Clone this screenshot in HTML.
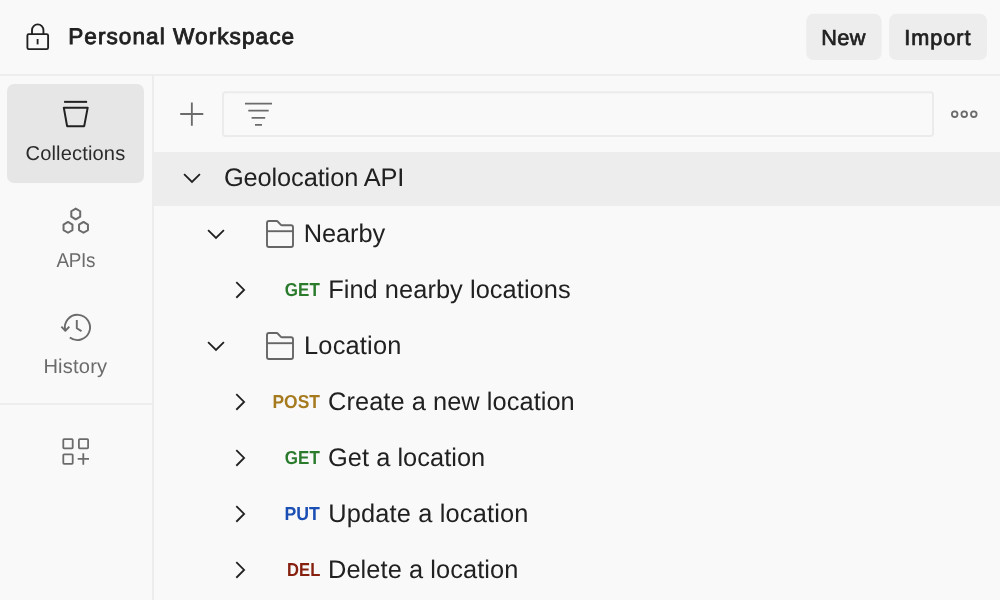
<!DOCTYPE html>
<html lang="en">
<head>
<meta charset="utf-8">
<title>Personal Workspace</title>
<style>
*{box-sizing:border-box;margin:0;padding:0}
html,body{width:1000px;height:600px;overflow:hidden;background:#f9f9f9}
body{font-family:"Liberation Sans",Arial,sans-serif;color:#212121;text-rendering:geometricPrecision}
#app{position:absolute;left:0;top:0;width:1000px;height:600px;overflow:hidden;will-change:transform}
ul,li{list-style:none}
button{all:unset}
.t{position:absolute;display:block;white-space:nowrap;line-height:1;font-weight:normal;transform-origin:0 0}
.ic{position:absolute;display:block;overflow:visible}
#hline{position:absolute;left:0;top:74px;width:1000px;height:2px;background:#ededed}
#vline{position:absolute;left:152px;top:75px;width:2px;height:525px;background:#ededed}
#divider{position:absolute;left:0;top:403px;width:153px;height:2px;background:#ededed}
#active-bg{position:absolute;left:7px;top:84px;width:137px;height:99px;background:#e6e6e6;border-radius:7px}
#row-selected{position:absolute;left:154px;top:152px;width:846px;height:54px;background:#ededed}
#t-title{left:68.21px;top:26.47px;font-size:22.6px;color:#212121;-webkit-text-stroke:0.85px #212121;letter-spacing:1.051px;}
#t-new{left:821.35px;top:27.43px;font-size:21.7px;color:#212121;-webkit-text-stroke:0.72px #212121;letter-spacing:0.310px;}
#t-import{left:904.28px;top:27.43px;font-size:21.7px;color:#212121;-webkit-text-stroke:0.72px #212121;letter-spacing:0.949px;}
#t-coll{left:25.55px;top:143.69px;font-size:20.1px;color:#2b2b2b;letter-spacing:0.135px;}
#t-apis{left:56.00px;top:251.19px;font-size:20.1px;color:#6b6b6b;letter-spacing:-0.330px;transform:translateX(0.47px) scaleX(0.9400);}
#t-hist{left:43.40px;top:357.19px;font-size:20.1px;color:#6b6b6b;letter-spacing:0.198px;}
#t-geo{left:223.90px;top:166.40px;font-size:25.4px;color:#212121;letter-spacing:-0.114px;}
#t-nearby{left:303.80px;top:222.40px;font-size:25.4px;color:#212121;letter-spacing:-0.097px;}
#t-find{left:328.13px;top:278.40px;font-size:25.4px;color:#212121;letter-spacing:0.059px;}
#t-location{left:304.03px;top:334.40px;font-size:25.4px;color:#212121;letter-spacing:0.198px;}
#t-create{left:328.09px;top:390.40px;font-size:25.4px;color:#212121;letter-spacing:0.054px;}
#t-geta{left:328.01px;top:446.40px;font-size:25.4px;color:#212121;letter-spacing:0.040px;}
#t-update{left:328.30px;top:502.40px;font-size:25.4px;color:#212121;letter-spacing:0.151px;}
#t-delete{left:327.98px;top:558.40px;font-size:25.4px;color:#212121;letter-spacing:0.082px;}
#t-get1{left:284.00px;top:281.13px;font-size:18.75px;color:#2b7b2d;font-weight:bold;transform:translateX(0.86px) scaleX(0.9051);}
#t-post{left:272.00px;top:393.13px;font-size:18.75px;color:#a67a1e;font-weight:bold;transform:translateX(0.49px) scaleX(0.9282);}
#t-get2{left:284.00px;top:449.13px;font-size:18.75px;color:#2b7b2d;font-weight:bold;transform:translateX(0.86px) scaleX(0.9051);}
#t-put{left:284.00px;top:505.13px;font-size:18.75px;color:#1b4fb3;font-weight:bold;transform:translateX(0.46px) scaleX(0.9438);}
#t-del{left:287.00px;top:561.13px;font-size:18.75px;color:#86200f;font-weight:bold;transform:translateX(0.10px) scaleX(0.8849);}
</style>
</head>
<body>
<div id="app">
<header class="topbar">
  <div class="workspace"><svg class="ic lock" style="left:22px;top:20px" width="32" height="32" viewBox="22 20 32 32" fill="none" stroke="#212121" stroke-width="1.85" stroke-linejoin="round"><rect x="27.4" y="34.15" width="20.7" height="14.95" rx="1.4"/><path d="M32 34.15v-4a5.72 5.72 0 0 1 11.44 0v4"/><path d="M37.6 39v5.4"/></svg><h1 class="t" id="t-title">Personal Workspace</h1></div>
  <div class="actions">
    <button type="button"><svg class="ic bg" style="left:800px;top:8px" width="90" height="60" viewBox="800 8 90 60" fill="none"><rect x="806.25" y="13.85" width="75.35" height="46.15" rx="7" fill="#ededed"/></svg><span class="t" id="t-new">New</span></button>
    <button type="button"><svg class="ic bg" style="left:884px;top:8px" width="110" height="60" viewBox="884 8 110 60" fill="none"><rect x="889.15" y="13.85" width="97.85" height="46.15" rx="7" fill="#ededed"/></svg><span class="t" id="t-import">Import</span></button>
  </div>
  <div id="hline"></div>
</header>
<nav class="sidebar">
  <div id="vline"></div>
  <ul>
    <li class="nav-item active"><div id="active-bg"></div><svg class="ic nav-ic" style="left:60px;top:96px" width="32" height="34" viewBox="60 96 32 34" fill="none" stroke="#212121" stroke-width="2" stroke-linejoin="round"><path d="M64.1 101.85h23"/><path d="M63.8 107.65h23.9l-3.5 18.5h-17.1z"/></svg><span class="t label" id="t-coll">Collections</span></li>
    <li class="nav-item"><svg class="ic nav-ic" style="left:60px;top:204px" width="32" height="34" viewBox="60 204 32 34" fill="none" stroke="#6b6b6b" stroke-width="2" stroke-linejoin="round"><path d="M75.75 208.55l4.45 2.70v5.40l-4.45 2.70-4.45-2.70v-5.40z"/><path d="M68.0 221.95l4.45 2.70v5.40l-4.45 2.70-4.45-2.70v-5.40z"/><path d="M83.5 221.95l4.45 2.70v5.40l-4.45 2.70-4.45-2.70v-5.40z"/></svg><span class="t label" id="t-apis">APIs</span></li>
    <li class="nav-item"><svg class="ic nav-ic" style="left:58px;top:310px" width="36" height="34" viewBox="58 310 36 34" fill="none" stroke="#6b6b6b" stroke-width="1.9" stroke-linejoin="round"><path d="M65.2 330.45A12.6 12.6 0 1 1 69.8 337.45"/><path d="M61.4 326.6l3.95 4.2 3.95-4.2"/><path d="M76.8 320v8.2l4.7 2.9"/></svg><span class="t label" id="t-hist">History</span></li>
  </ul>
  <div id="divider"></div>
  <button type="button" class="nav-item"><svg class="ic nav-ic" style="left:60px;top:435px" width="32" height="34" viewBox="60 435 32 34" fill="none" stroke="#6b6b6b" stroke-width="1.8" stroke-linejoin="round"><rect x="63.3" y="439.1" width="9.4" height="9.2" rx="0.8"/><rect x="78.9" y="439.1" width="9.2" height="9.2" rx="0.8"/><rect x="63.3" y="454.3" width="9.4" height="9.6" rx="0.8"/><path d="M83.3 453.3v11.4M77.7 458.9h11.3"/></svg></button>
</nav>
<main class="panel">
  <div class="toolbar">
    <button type="button"><svg class="ic tool" style="left:176px;top:98px" width="32" height="32" viewBox="176 98 32 32" fill="none" stroke="#6b6b6b" stroke-width="1.85"><path d="M191.85 102.6v23.2M180.2 114h23.1"/></svg></button>
    <div class="searchbox"><svg class="ic search" style="left:220px;top:88px" width="716" height="52" viewBox="220 88 716 52" fill="none"><rect x="223.05" y="92.2" width="709.95" height="43.8" rx="2.6" stroke="#ebebeb" stroke-width="1.9"/><path stroke="#6b6b6b" stroke-width="1.85" d="M245 103.6h27M248.3 110.6h20.4M251.6 117.8h13.6M255 124.8h7"/></svg></div>
    <button type="button"><svg class="ic tool" style="left:948px;top:98px" width="32" height="32" viewBox="948 98 32 32" fill="none" stroke="#6b6b6b" stroke-width="1.8"><circle cx="954.7" cy="114.2" r="2.8"/><circle cx="964.25" cy="114.2" r="2.8"/><circle cx="973.8" cy="114.2" r="2.8"/></svg></button>
  </div>
  <ul class="tree">
    <li class="row collection"><div id="row-selected"></div><svg class="ic chev" style="left:180px;top:166px" width="24" height="24" viewBox="180 166 24 24" fill="none" stroke="#212121" stroke-width="1.8"><path d="M184.10 174.10l7.9 7.9 7.9-7.9"/></svg><span class="t name" id="t-geo">Geolocation API</span>
      <ul>
        <li class="row folder"><svg class="ic chev" style="left:204px;top:222px" width="24" height="24" viewBox="204 222 24 24" fill="none" stroke="#212121" stroke-width="1.8"><path d="M208.10 230.10l7.9 7.9 7.9-7.9"/></svg><svg class="ic folder" style="left:264px;top:218px" width="32" height="32" viewBox="264 218 32 32" fill="none" stroke="#666666" stroke-width="1.9" stroke-linejoin="round"><path d="M267 223a2 2 0 0 1 2-2h7.6a1.6 1.6 0 0 1 1.1.5l3.2 3.3a1.6 1.6 0 0 0 1.1.5H291a2 2 0 0 1 2 2V245a2 2 0 0 1-2 2H269a2 2 0 0 1-2-2z"/><path d="M267 231.2h26"/></svg><span class="t name" id="t-nearby">Nearby</span>
          <ul>
            <li class="row request"><svg class="ic chev" style="left:228px;top:277px" width="24" height="24" viewBox="228 277 24 24" fill="none" stroke="#212121" stroke-width="1.8"><path d="M236.30 282.05l7.8 7.85-7.8 7.85"/></svg><span class="t method get" id="t-get1">GET</span><span class="t name" id="t-find">Find nearby locations</span></li>
          </ul>
        </li>
        <li class="row folder"><svg class="ic chev" style="left:204px;top:334px" width="24" height="24" viewBox="204 334 24 24" fill="none" stroke="#212121" stroke-width="1.8"><path d="M208.10 342.10l7.9 7.9 7.9-7.9"/></svg><svg class="ic folder" style="left:264px;top:330px" width="32" height="32" viewBox="264 330 32 32" fill="none" stroke="#666666" stroke-width="1.9" stroke-linejoin="round"><path d="M267 335a2 2 0 0 1 2-2h7.6a1.6 1.6 0 0 1 1.1.5l3.2 3.3a1.6 1.6 0 0 0 1.1.5H291a2 2 0 0 1 2 2V357a2 2 0 0 1-2 2H269a2 2 0 0 1-2-2z"/><path d="M267 343.2h26"/></svg><span class="t name" id="t-location">Location</span>
          <ul>
            <li class="row request"><svg class="ic chev" style="left:228px;top:389px" width="24" height="24" viewBox="228 389 24 24" fill="none" stroke="#212121" stroke-width="1.8"><path d="M236.30 394.05l7.8 7.85-7.8 7.85"/></svg><span class="t method post" id="t-post">POST</span><span class="t name" id="t-create">Create a new location</span></li>
            <li class="row request"><svg class="ic chev" style="left:228px;top:445px" width="24" height="24" viewBox="228 445 24 24" fill="none" stroke="#212121" stroke-width="1.8"><path d="M236.30 450.05l7.8 7.85-7.8 7.85"/></svg><span class="t method get" id="t-get2">GET</span><span class="t name" id="t-geta">Get a location</span></li>
            <li class="row request"><svg class="ic chev" style="left:228px;top:501px" width="24" height="24" viewBox="228 501 24 24" fill="none" stroke="#212121" stroke-width="1.8"><path d="M236.30 506.05l7.8 7.85-7.8 7.85"/></svg><span class="t method put" id="t-put">PUT</span><span class="t name" id="t-update">Update a location</span></li>
            <li class="row request"><svg class="ic chev" style="left:228px;top:557px" width="24" height="24" viewBox="228 557 24 24" fill="none" stroke="#212121" stroke-width="1.8"><path d="M236.30 562.05l7.8 7.85-7.8 7.85"/></svg><span class="t method del" id="t-del">DEL</span><span class="t name" id="t-delete">Delete a location</span></li>
          </ul>
        </li>
      </ul>
    </li>
  </ul>
</main>
</div>
</body>
</html>
